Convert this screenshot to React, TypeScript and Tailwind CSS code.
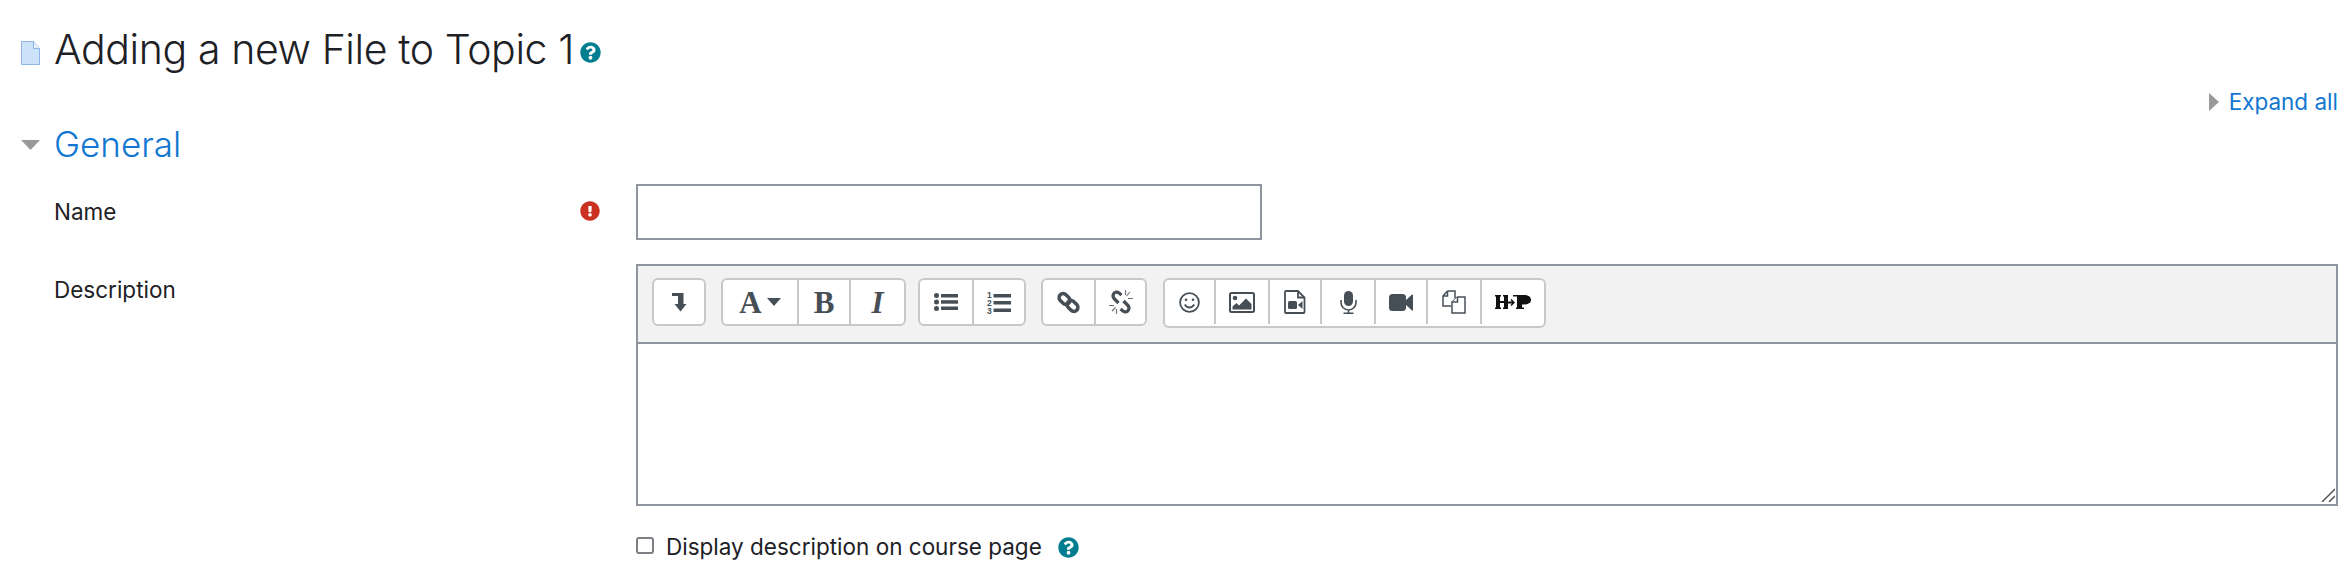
import React from "react";
import { FaQuestionCircle, FaExclamationCircle } from "react-icons/fa";

const INK = "#474f56";

function Btn({ w, last, children }: { w: string; last?: boolean; children: React.ReactNode }) {
  return (
    <div className={`flex items-center justify-center h-full ${w} ${last ? "" : "border-r-2 border-[#c8c8c8]"}`}>{children}</div>
  );
}

function LevelDown() {
  return (
    <svg width="16" height="20" viewBox="0 0 16 20" fill={INK}>
      <path d="M1 1h11.500v11h3L9.500 19.500 3.500 12H7V4H1z" />
    </svg>
  );
}

function Caret() {
  return (
    <svg width="14" height="8" viewBox="0 0 14 8" fill={INK} className="ml-[5px]">
      <path d="M0 0h14L7 8z" />
    </svg>
  );
}

function ListUl() {
  return (
    <svg width="24" height="18" viewBox="0 0 24 18" fill={INK}>
      <circle cx="2.500" cy="2.500" r="2.500" />
      <circle cx="2.500" cy="9" r="2.500" />
      <circle cx="2.500" cy="15.500" r="2.500" />
      <rect x="7" y="1" width="17" height="3.500" />
      <rect x="7" y="7.200" width="17" height="3.500" />
      <rect x="7" y="13.500" width="17" height="3.500" />
    </svg>
  );
}

function ListOl() {
  return (
    <svg width="24" height="23" viewBox="0 0 24 23" fill={INK}>
      <text x="0" y="7" fontSize="8.500" fontWeight="700" fontFamily="'Liberation Sans', sans-serif">1</text>
      <text x="0" y="14.500" fontSize="8.500" fontWeight="700" fontFamily="'Liberation Sans', sans-serif">2</text>
      <text x="0" y="22.500" fontSize="8.500" fontWeight="700" fontFamily="'Liberation Sans', sans-serif">3</text>
      <rect x="6.500" y="3" width="17.500" height="3.500" />
      <rect x="6.500" y="10" width="17.500" height="3.500" />
      <rect x="6.500" y="17.500" width="17.500" height="3.500" />
    </svg>
  );
}

function LinkIcon() {
  return (
    <svg width="23" height="23" viewBox="0 0 23 23" fill="none" stroke={INK} strokeWidth="3.500">
      <rect x="1.500" y="4" width="12" height="8" rx="4" transform="rotate(45 7.500 8)" />
      <rect x="9.500" y="11" width="12" height="8" rx="4" transform="rotate(45 15.500 15)" />
    </svg>
  );
}

function Unlink() {
  return (
    <svg width="24" height="24" viewBox="0 0 24 24" fill="none">
      <path d="M12.500 5 10 3C8 1.500 5.500 2 4.500 4S4 7.500 5.500 9l4 4" stroke={INK} strokeWidth="3.200" />
      <path d="M11.500 19l2.500 2c2 1.500 4.500 1 5.500-1s.5-3.500-1-5l-4-4" stroke={INK} strokeWidth="3.200" />
      <path d="M16.500 0v5M21 2l-3.500 4M24 8.500h-5M0 15.500h5M3 21l3.500-3.500M7.500 24v-5" stroke="#6d7379" strokeWidth="1.100" />
    </svg>
  );
}

function Smile() {
  return (
    <svg width="21" height="21" viewBox="0 0 21 21" fill="none" stroke={INK} strokeWidth="1.800">
      <circle cx="10.500" cy="10.500" r="9.400" />
      <circle cx="7" cy="7.800" r="1.300" fill={INK} stroke="none" />
      <circle cx="14" cy="7.800" r="1.300" fill={INK} stroke="none" />
      <path d="M5.800 12.500c1.200 2 2.800 3 4.700 3s3.500-1 4.700-3" />
    </svg>
  );
}

function ImageIcon() {
  return (
    <svg width="26" height="21" viewBox="0 0 26 21" fill={INK}>
      <rect x="1" y="1" width="24" height="19" rx="1.500" fill="none" stroke={INK} strokeWidth="2" />
      <circle cx="6" cy="6" r="2.300" />
      <path d="M3.500 17.500v-3l4-3.500 2.500 2.500 7-7 5.500 5.500v5.500z" />
    </svg>
  );
}

function FileVideo() {
  return (
    <svg width="22" height="24" viewBox="0 0 22 24" fill="none" stroke={INK} strokeWidth="1.800">
      <path d="M2 1h12l6.500 6.500V22a1 1 0 0 1-1 1H2a1 1 0 0 1-1-1V2a1 1 0 0 1 1-1z" />
      <path d="M14 1v6.500h6.500" />
      <rect x="4" y="11" width="9" height="8" rx="1.500" fill={INK} stroke="none" />
      <path d="M14 15l4.500-4v8z" fill={INK} stroke="none" />
    </svg>
  );
}

function Mic() {
  return (
    <svg width="17" height="23" viewBox="0 0 17 23" fill="none" stroke={INK} strokeWidth="1.600">
      <rect x="4" y="0" width="9" height="15" rx="4.500" fill={INK} stroke="none" />
      <path d="M1 9v2.500a7.500 7.500 0 0 0 15 0V9M8.500 19v3M3.500 22.200h10" />
    </svg>
  );
}

function VideoIcon() {
  return (
    <svg width="24" height="17" viewBox="0 0 24 17" fill={INK}>
      <rect x="0" y="0" width="17" height="17" rx="3.500" />
      <path d="M16 7l7-6.500c.5-.3 1 0 1 .5v15c0 .5-.5.800-1 .5L16 10z" />
    </svg>
  );
}

function CopyIcon() {
  return (
    <svg width="24" height="24" viewBox="0 0 24 24" fill="#fff" stroke={INK} strokeWidth="1.500">
      <path d="M5.500 1H13v7M5.500 1 1 6v10h8M5.500 1v5H1" />
      <path d="M15.500 7H23v16H10V12z" />
      <path d="M15.500 7v5H10" />
    </svg>
  );
}

function H5P() {
  return (
    <svg width="36" height="16" viewBox="0 0 36 16" fill="#111">
      <path d="M0 1h6v1.500H5V7h4V2.500H8V1h5v14H8v-1.500h1V9H5v4.500h1V15H0v-1.500h1v-11H0z" />
      <path d="M12 7.500h5l-1.500-1.500 1-1 3.500 3.500-3.500 3.500-1-1 1.500-1.500h-5z" />
      <path d="M18 1h11c4 0 7 1.500 7 4.800S33 10.500 29 10.500h-2v3h2V15h-8v-1.500h1V2.500h-4z" />
    </svg>
  );
}

export default function App() {
  return (
    <div className="min-h-[566px] bg-white pl-[21px] pr-[8px] pt-[25px] text-[#1d2125] font-['Inter','Liberation_Sans',sans-serif]">
      <div className="flex items-center h-[48px]">
        <svg width="19" height="24" viewBox="0 0 19 24" className="mt-[8px]">
          <path d="M.5.5h12l6 7v16H.5z" fill="#cbe2f9" stroke="#8fb2ea" />
          <path d="M12.500.5v7h6" fill="#e8f2fc" stroke="#8fb2ea" />
        </svg>
        <h1 className="ml-[14px] text-[41px] leading-[48px] font-light tracking-[-0.4px] whitespace-nowrap">Adding a new File to Topic 1</h1>
        <FaQuestionCircle className="ml-[6px] mt-[7px] text-[21px] text-[#007d8e]" />
      </div>
      <div className="flex justify-end items-center h-[24px] mt-[17px]">
        <svg width="10" height="18" viewBox="0 0 10 18" fill="#999" className="mr-[10px]">
          <path d="M0 0l10 9-10 9z" />
        </svg>
        <span className="text-[22.500px] text-[#1177d1] leading-[24px] whitespace-nowrap">Expand all</span>
      </div>
      <div className="flex items-center h-[40px] mt-[10px]">
        <svg width="19" height="10" viewBox="0 0 19 10" fill="#999" className="mt-[2px]">
          <path d="M0 0h19l-9.500 10z" />
        </svg>
        <h2 className="ml-[14px] text-[35px] leading-[40px] font-light text-[#1177d1]">General</h2>
      </div>
      <div className="flex mt-[20px]">
        <div className="w-[615px] shrink-0 flex justify-between items-start pl-[33px] pr-[36px] pt-[15px]">
          <span className="text-[22.500px] leading-[26px]">Name</span>
          <FaExclamationCircle className="text-[20px] text-[#ca3120] mt-[2px]" />
        </div>
        <div className="w-[626px] h-[56px] border-2 border-[#8f959e] bg-white" />
      </div>
      <div className="flex mt-[24px]">
        <div className="w-[615px] shrink-0 pl-[33px] pt-[13px]">
          <span className="text-[22.500px] leading-[26px]">Description</span>
        </div>
        <div className="flex-1">
          <div className="h-[242px] border-2 border-[#8f959e] flex flex-col">
            <div className="h-[78px] bg-[#f2f2f2] border-b-2 border-[#8f959e] flex items-start pt-[12px] pl-[14px] shrink-0 text-[#474f56]">
              <div className="w-[54px] h-[48px] bg-white rounded-[6px] border-2 border-[#c8c8c8] flex items-center justify-center"><LevelDown /></div>
              <div className="ml-[15px] w-[185px] h-[48px] bg-white rounded-[6px] border-2 border-[#c8c8c8] flex items-center">
                <Btn w="w-[76px]"><span className="font-['Liberation_Serif'] font-bold text-[31px] leading-none">A</span><Caret /></Btn>
                <Btn w="w-[52px]"><span className="font-['Liberation_Serif'] font-bold text-[31px] leading-none">B</span></Btn>
                <Btn w="flex-1" last><span className="font-['Liberation_Serif'] font-bold italic text-[31px] leading-none">I</span></Btn>
              </div>
              <div className="ml-[12px] w-[108px] h-[48px] bg-white rounded-[6px] border-2 border-[#c8c8c8] flex items-center">
                <Btn w="w-[54px]"><ListUl /></Btn>
                <Btn w="flex-1" last><ListOl /></Btn>
              </div>
              <div className="ml-[15px] w-[106px] h-[48px] bg-white rounded-[6px] border-2 border-[#c8c8c8] flex items-center">
                <Btn w="w-[53px]"><LinkIcon /></Btn>
                <Btn w="flex-1" last><Unlink /></Btn>
              </div>
              <div className="ml-[16px] w-[383px] h-[50px] bg-white rounded-[6px] border-2 border-[#c8c8c8] flex items-center pb-[2px]">
                <Btn w="w-[51px]"><Smile /></Btn>
                <Btn w="w-[54px]"><ImageIcon /></Btn>
                <Btn w="w-[52px]"><FileVideo /></Btn>
                <Btn w="w-[54px]"><Mic /></Btn>
                <Btn w="w-[52px]"><VideoIcon /></Btn>
                <Btn w="w-[54px]"><CopyIcon /></Btn>
                <Btn w="flex-1" last><H5P /></Btn>
              </div>
            </div>
            <div className="flex-1 relative">
              <svg width="14" height="14" viewBox="0 0 14 14" className="absolute right-[1px] bottom-[2px]" stroke="#555" strokeWidth="1.500">
                <path d="M1 14 14 1M8 14l6-6" />
              </svg>
            </div>
          </div>
          <div className="flex items-center h-[24px] mt-[29px]">
            <div className="w-[18px] h-[17px] border-2 border-[#7c7f83] rounded-[3px] bg-white -mt-[3px]" />
            <span className="ml-[12px] text-[22.500px] leading-[24px] whitespace-nowrap">Display description on course page</span>
            <FaQuestionCircle className="ml-[16px] text-[21px] text-[#007d8e]" />
          </div>
        </div>
      </div>
    </div>
  );
}
